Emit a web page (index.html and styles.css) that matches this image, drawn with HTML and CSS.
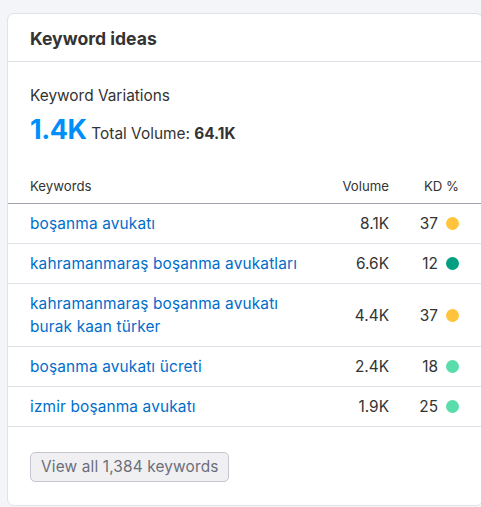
FILE: index.html
```html
<!DOCTYPE html>
<html>
<head>
<meta charset="utf-8">
<link rel="stylesheet" href="styles.css">
</head>
<body>
<div class="card">
  <div class="card-header">Keyword ideas</div>
  <div class="summary">
    <div class="summary-label">Keyword Variations</div>
    <div class="summary-values">
      <span class="big">1.4K</span>
      <span class="total">Total Volume: <b>64.1K</b></span>
    </div>
  </div>
  <table class="kw-table">
    <thead>
      <tr><th class="c-kw">Keywords</th><th class="c-vol">Volume</th><th class="c-kd">KD %</th></tr>
    </thead>
    <tbody>
      <tr><td class="c-kw"><a>boşanma avukatı</a></td><td class="c-vol">8.1K</td><td class="c-kd">37<span class="dot yellow"></span></td></tr>
      <tr><td class="c-kw"><a>kahramanmaraş boşanma avukatları</a></td><td class="c-vol">6.6K</td><td class="c-kd">12<span class="dot dgreen"></span></td></tr>
      <tr><td class="c-kw"><a>kahramanmaraş boşanma avukatı<br>burak kaan türker</a></td><td class="c-vol">4.4K</td><td class="c-kd">37<span class="dot yellow"></span></td></tr>
      <tr><td class="c-kw"><a>boşanma avukatı ücreti</a></td><td class="c-vol">2.4K</td><td class="c-kd">18<span class="dot lgreen"></span></td></tr>
      <tr><td class="c-kw"><a>izmir boşanma avukatı</a></td><td class="c-vol">1.9K</td><td class="c-kd">25<span class="dot lgreen"></span></td></tr>
    </tbody>
  </table>
  <div class="footer">
    <button class="btn">View all 1,384 keywords</button>
  </div>
</div>
</body>
</html>
```
FILE: styles.css
```css
html, body {
  margin: 0;
  padding: 0;
  background: #f4f5f9;
  overflow: hidden;
}
body {
  font-family: Inter, "Noto Sans", sans-serif;
  color: #333;
  padding: 13px 0 0 7px;
}
.card {
  width: 476px;
  box-sizing: border-box;
  background: #fff;
  border: 1px solid #e0e1e9;
  border-radius: 7px;
  height: 493px;
}
.card-header {
  height: 48px;
  box-sizing: border-box;
  padding: 14px 0 0 22px;
  font-size: 17.6px;
  font-weight: 700;
  line-height: 22px;
  color: #333;
  border-bottom: 1px solid #e0e1e9;
}
.summary {
  padding: 24px 22px 0;
}
.summary-label {
  font-size: 15.4px;
  line-height: 20px;
  color: #333;
}
.summary-values {
  display: flex;
  align-items: baseline;
  gap: 5px;
  margin-top: 7px;
}
.big {
  font-size: 27px;
  font-weight: 700;
  color: #008ff8;
  line-height: 34px;
  letter-spacing: -0.5px;
}
.total {
  font-size: 15.4px;
  color: #333;
}
.total b {
  font-weight: 700;
}
.kw-table {
  width: 100%;
  border-collapse: collapse;
  margin-top: 22px;
  font-size: 15.4px;
}
.kw-table th {
  font-size: 13.2px;
  font-weight: 400;
  color: #333;
  height: 33px;
  padding: 0 0 1px;
  vertical-align: middle;
  border-bottom: 1px solid #a0a3ad;
}
.kw-table td {
  padding: 8px 0;
  line-height: 23px;
  border-bottom: 1px solid #e0e1e9;
  vertical-align: middle;
}
.kw-table td a {
  letter-spacing: 0.15px;
}
.c-kw {
  text-align: left;
  padding-left: 22px !important;
}
.c-vol {
  text-align: right;
  width: 90px;
}
.c-kd {
  text-align: right;
  width: 70px;
  padding-right: 23px !important;
  white-space: nowrap;
}
.kw-table td a {
  color: #006dca;
  text-decoration: none;
}
.dot {
  display: inline-block;
  width: 13px;
  height: 13px;
  border-radius: 50%;
  margin-left: 8px;
  vertical-align: -1px;
}
.yellow { background: #ffc43c; }
.dgreen { background: #009f81; }
.lgreen { background: #59ddaa; }
.footer {
  padding: 25px 22px 0;
}
.btn {
  font-family: Inter, "Noto Sans", sans-serif;
  font-size: 15.4px;
  letter-spacing: 0.15px;
  color: #6c6e79;
  background: #f0f0f3;
  border: 1px solid #c4c7cf;
  border-radius: 5px;
  height: 30px;
  padding: 0 10px;
  line-height: 28px;
}
```
